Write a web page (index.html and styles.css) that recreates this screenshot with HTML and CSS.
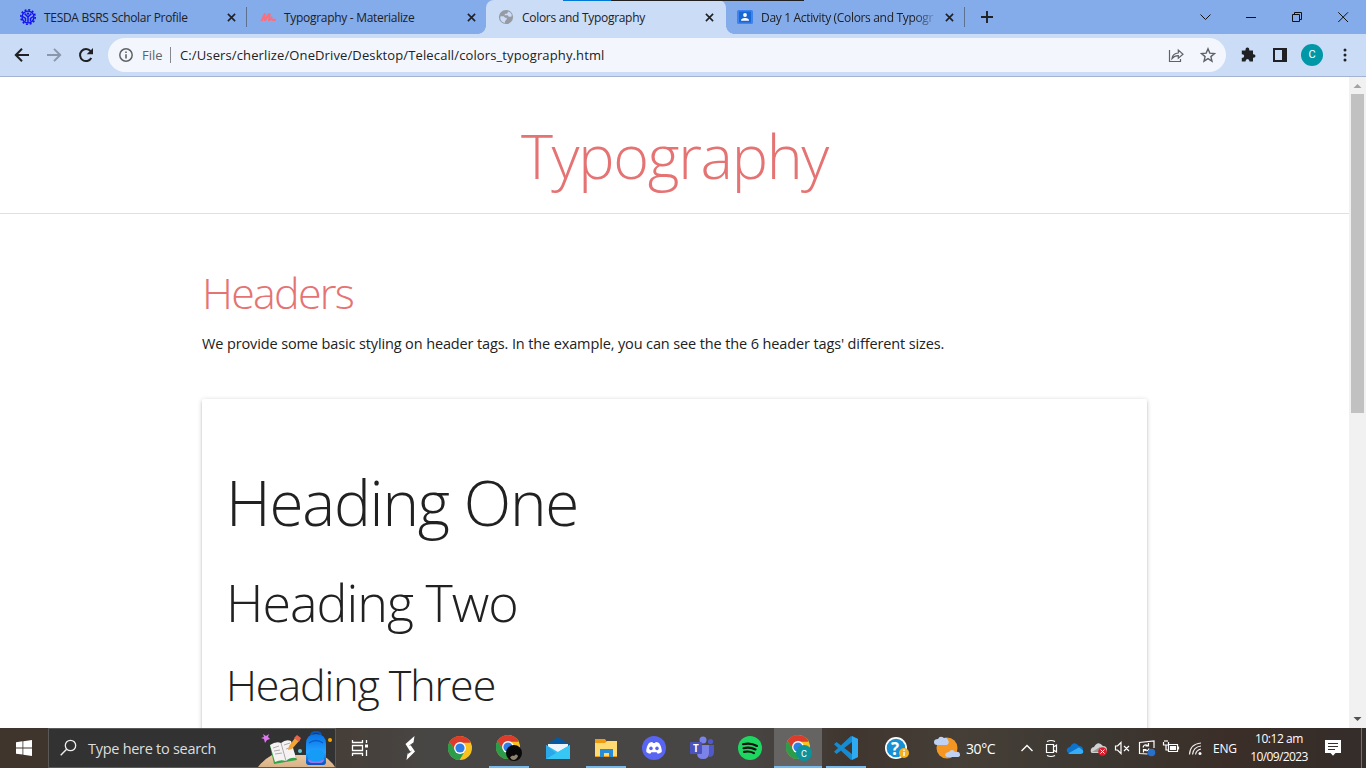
FILE: index.html
```html
<!DOCTYPE html>
<html lang="en">
<head>
<meta charset="utf-8">
<title>Colors and Typography</title>
<link rel="stylesheet" href="styles.css">
</head>
<body>
<svg class="defs" width="0" height="0">
  <defs>
    <symbol id="close" viewBox="0 0 9 9"><path d="M.9.9l7.2 7.2M8.1.9L.9 8.1" stroke="#202124" stroke-width="1.6" fill="none"/></symbol>
    <symbol id="chrome" viewBox="0 0 24 24">
      <circle cx="12" cy="12" r="12" fill="#f9c31f"/>
      <path d="M12 12L1.6 6A12 12 0 0 1 22.4 6.4L12 6.4z" fill="#dd3b2c"/>
      <path d="M1.6 6A12 12 0 0 0 11.4 24L17 14.6L7 14.6z" fill="#2c9c4b"/>
      <path d="M1.6 6A12 12 0 0 1 22.4 6.4H12a5.6 5.6 0 0 0-5 8z" fill="#dd3b2c"/>
      <path d="M1.6 6l5.5 8.7A5.6 5.6 0 0 0 16.9 14.8L11.4 24A12 12 0 0 1 1.6 6z" fill="#2c9c4b"/>
      <circle cx="12" cy="12" r="5.9" fill="#fff"/><circle cx="12" cy="12" r="4.6" fill="#2f7de8"/>
    </symbol>
  </defs>
</svg>

<header class="browser">
  <div class="tabs">
    <div class="tab tab-one">
      <svg class="favicon" viewBox="0 0 16 16"><circle cx="8" cy="8" r="7.2" fill="none" stroke="#1414ee" stroke-width="1.600" stroke-dasharray="2 1.770"/><circle cx="8" cy="8" r="5.900" fill="none" stroke="#1414ee" stroke-width="1.400"/><path d="M8 14V7.500M5.500 12.500V9.500L2.800 7.500M10.500 12.500v-3l2.700-2M4.600 4.600L8 8l3.400-3.400" stroke="#1414ee" stroke-width="1.500" fill="none"/><circle cx="8" cy="4.600" r="1.200" fill="#1414ee"/></svg>
      <span class="tab-title">TESDA BSRS Scholar Profile</span>
      <svg class="close"><use href="#close"/></svg>
    </div>
    <div class="tab tab-two">
      <svg class="favicon" viewBox="0 0 16 16"><path d="M.5 12L4 4.200h2.200L5 8.600 8.400 4.200h2.400l-.6 5 1.800-2.200.8 3.200 1.200-.4h1.500l.5 2.200h-3.600l-.7-1.600L10 12H7.800l.6-4L5.600 12H3.500l.8-3.200L2.600 12z" fill="#fb6f7c"/></svg>
      <span class="tab-title">Typography - Materialize</span>
      <svg class="close"><use href="#close"/></svg>
    </div>
    <div class="tab tab-active">
      <svg class="favicon" viewBox="0 0 16 16"><circle cx="8" cy="8" r="7.1" fill="#969ba3"/><path d="M2.600 7.200l3 .1 1.500 1.500h1.600v1.400L7.100 12l-.3 1.900Q2.600 13 2.200 9z" fill="#cbdcf6"/><path d="M10.300 2.500L9 4.800H7.200L6.400 6.200h3.300l1 1.500h2.600l.5-1.900Q13 3.500 10.300 2.500z" fill="#cbdcf6"/></svg>
      <span class="tab-title">Colors and Typography</span>
      <svg class="close"><use href="#close"/></svg>
    </div>
    <div class="tab tab-last">
      <svg class="favicon" viewBox="0 0 16 16"><rect y="1" width="16" height="14" rx="1.500" fill="#3f83f1"/><rect x="2" y="2.500" width="12" height="11" fill="#1967d2"/><circle cx="8" cy="6" r="1.900" fill="#fff"/><path d="M4 11.700Q4 9 8 9t4 2.700z" fill="#fff"/></svg>
      <span class="tab-title">Day 1 Activity (Colors and Typogr</span>
      <svg class="close"><use href="#close"/></svg>
    </div>
    <svg class="new-tab" viewBox="0 0 12 12"><path d="M6 0v12M0 6h12" stroke="#202124" stroke-width="1.900"/></svg>
    <div class="window-buttons">
      <svg viewBox="0 0 46 28"><path d="M18.500 11.500l5 5 5-5" /></svg>
      <svg viewBox="0 0 46 28"><path d="M18 14.500h10"/></svg>
      <svg viewBox="0 0 46 28"><path d="M18.500 11.500h7v7h-7zM20.500 11v-1.500h7v7H26"/></svg>
      <svg viewBox="0 0 46 28"><path d="M18.300 9.300l9.700 9.700M28 9.300L18.300 19"/></svg>
    </div>
    <div class="peek"></div>
  </div>
  <div class="toolbar">
    <div class="nav">
      <svg viewBox="0 0 16 16"><path d="M15 8H2M8 1.800L1.800 8 8 14.200" stroke="#202124" stroke-width="2" fill="none"/></svg>
      <svg viewBox="0 0 16 16"><path d="M1 8h13M8 1.800L14.200 8 8 14.200" stroke="#8a96a9" stroke-width="1.900" fill="none"/></svg>
      <svg viewBox="0 0 16 16"><path d="M13.300 11A6 6 0 1 1 12.600 4.200" stroke="#202124" stroke-width="2" fill="none"/><path d="M15 1v6.300H8.700z" fill="#202124"/></svg>
    </div>
    <div class="address">
      <svg class="info" viewBox="0 0 14 14"><circle cx="7" cy="7" r="6.200" stroke="#5f6368" stroke-width="1.500" fill="none"/><path d="M7 6.200v4.300M7 3.400V5" stroke="#5f6368" stroke-width="1.600"/></svg>
      <span class="scheme">File</span>
      <span class="url">C:/Users/cherlize/OneDrive/Desktop/Telecall/colors_typography.html</span>
      <svg class="share" viewBox="0 0 16 16"><path d="M1.500 3v11.500h11V12M4 11.500Q4.600 6.500 10.300 6V3L15 7.200 10.300 11.300V8.600Q6.500 8.500 4 11.500z" fill="none" stroke="#5f6368" stroke-width="1.200"/></svg>
      <svg class="star" viewBox="0 0 16 16"><path d="M8 1.800l1.800 4.300 4.700.4-3.600 3.100 1.100 4.600L8 11.700l-4 2.500 1.100-4.600L1.500 6.500l4.700-.4z" fill="none" stroke="#5f6368" stroke-width="1.400"/></svg>
    </div>
    <div class="extensions">
      <svg viewBox="0 0 16 16"><path d="M1.800 3.500h3.700Q5.300.6 7.400.6t1.900 2.900H13v3.700q2.500-.2 2.500 1.800T13 10.800v3.700H9.500Q9.500 12 7.500 12t-2 2.500H1.800V11Q4.200 11 4.200 9T1.800 7.200z" fill="#202124"/></svg>
      <svg viewBox="0 0 16 16"><path d="M2 2h12v12H2z" fill="none" stroke="#202124" stroke-width="2"/><path d="M10 2h4v12h-4z" fill="#202124"/></svg>
      <span class="avatar">C</span>
      <svg class="kebab" viewBox="0 0 16 16"><circle cx="8" cy="3" r="1.500"/><circle cx="8" cy="8" r="1.500"/><circle cx="8" cy="13" r="1.500"/></svg>
    </div>
  </div>
</header>

<div class="viewport">
  <main class="page">
    <div class="masthead"><h1 class="page-title">Typography</h1></div>
    <section class="container">
      <h3 class="section-title">Headers</h3>
      <p class="intro">We provide some basic styling on header tags. In the example, you can see the the 6 header tags' different sizes.</p>
      <div class="card">
        <h1 class="heading one">Heading One</h1>
        <h2 class="heading two">Heading Two</h2>
        <h3 class="heading three">Heading Three</h3>
      </div>
    </section>
  </main>
  <div class="scrollbar">
    <svg viewBox="0 0 17 17"><path d="M4.500 11L8.500 7l4 4z" fill="#a3a3a3"/></svg>
    <div class="thumb"></div>
    <svg viewBox="0 0 17 17"><path d="M4.500 6l4 4 4-4z" fill="#505050"/></svg>
  </div>
</div>

<footer class="taskbar">
  <div class="start"><svg width="16" height="16" viewBox="0 0 16 16"><path d="M0 2.200l6.500-.9v6.200H0zM7.300 1.200L16 0v7.500H7.300zM0 8.400h6.500v6.200L0 13.700zM7.300 8.400H16V16l-8.700-1.200z" fill="#fff"/></svg></div>
  <div class="search">
    <svg width="18" height="18" viewBox="0 0 18 18"><circle cx="10.500" cy="6.500" r="5.200" fill="none" stroke="#eee" stroke-width="1.300"/><path d="M6.600 10.300L.7 16.200" stroke="#eee" stroke-width="1.400"/></svg>
    <span>Type here to search</span>
    <svg class="school" width="80" height="38" viewBox="0 0 80 38">
      <defs><linearGradient id="desk" x2="0" y2="1"><stop stop-color="#e9c8a0"/><stop offset="1" stop-color="#d9b287"/></linearGradient><linearGradient id="bag" x2="0" y2="1"><stop stop-color="#0872e6"/><stop offset=".6" stop-color="#24a2ff"/><stop offset="1" stop-color="#0750bd"/></linearGradient></defs>
      <path d="M1 38q5-7 14-12h50q9 5 13 12z" fill="url(#desk)"/>
      <path d="M6 5l3 2 3-2-1 3 2 2-3 1-2 3-1-4-3-1 3-1z" fill="#df79ef"/>
      <path d="M13 17l4 18 23-4-3-8z" fill="#34a447"/><path d="M13 16q6-4 11-2 5-4 10-2l5 17q-6-1-10 3-5-2-11 1z" fill="#f6f2f3"/><path d="M24 14l5 18" stroke="#aaa" fill="none"/><path d="M16 19l6-2m-5 5l6-1m-5 4l7-1m2-8l6-2m-4 6l6-2" stroke="#999" stroke-width=".8"/>
      <path d="M31 21l1-4L38 9l4 3-7 8z" fill="#f3a536"/><path d="M37 9l3-3 4 3-2 4z" fill="#e8634e"/>
      <circle cx="43" cy="22" r="2" fill="#63cbd7"/><circle cx="73" cy="11" r="2" fill="#f8a900"/>
      <path d="M54 7q0-4 5-4t5 4" fill="none" stroke="#0756b8" stroke-width="2"/><path d="M49 33V15q0-10 10-10t10 10v18q0 3-3 3H52q-3 0-3-3z" fill="url(#bag)"/><rect x="51" y="21" width="16" height="12" rx="5" fill="#159cf6"/><path d="M51 30q0 4 4 4h8q4 0 4-4-8 5-16 0z" fill="#9476ed"/>
      <path d="M52 14q7-5 14 0" stroke="#0a5ccb" stroke-width="1.500" fill="none"/>
    </svg>
  </div>
  <div class="app view"><svg viewBox="0 0 24 24"><path d="M4.500 4v2.500h10V4M4.500 20v-2.500h10V20M4.500 9.500h10v5h-10zM18.500 4v3M18.500 14v6" fill="none" stroke="#fff" stroke-width="1.300"/><rect x="17" y="8.500" width="3" height="3" fill="#fff"/></svg></div>
  <div class="app slash"><svg viewBox="0 0 24 24"><path d="M16.500 0l-1 6.500-3 2.500 4.500 6.500L8.500 24l1-6.500 3-1.500-5-8z" fill="#fff"/><path d="M11.500 9.500l4-2.500M9.500 18l4-3" stroke="#555" stroke-width=".8"/></svg></div>
  <div class="app chrome-one"><svg viewBox="0 0 24 24"><use href="#chrome"/></svg></div>
  <div class="app chrome-two open"><svg viewBox="0 0 26 26"><use href="#chrome" width="24" height="24"/><circle cx="18" cy="18" r="8" fill="#090909"/><path d="M14 22.500q2.500-3 4-1.500 3-3 4 .5-2 3.500-4 3.500-2.500 0-4-2.500z" fill="#8f846f"/></svg></div>
  <div class="app"><svg viewBox="0 0 24 24"><path d="M0 9L12 1l12 8v2H0z" fill="#0758a3"/><path d="M2 8h20v10H2z" fill="#eef5fa"/><path d="M0 9l12 7 12-7v14H0z" fill="#35bff1"/><path d="M0 9l17 14H0z" fill="#2ba8ea"/><path d="M0 23l24-14v14z" fill="#36c7f5"/></svg></div>
  <div class="app open"><svg viewBox="0 0 24 24"><path d="M1 3h10l2 3h10v15H1z" fill="#ed9b13"/><path d="M1 7h10l2-2h10v15H1z" fill="#ffda70"/><path d="M6 13h13v8h-4v-4h-5v4H6z" fill="#278cd7"/></svg></div>
  <div class="app"><svg viewBox="0 0 24 24"><circle cx="12" cy="12" r="12" fill="#5865f2"/><path d="M7 7q2-1 3.300-1l.7 1h2l.7-1Q15 6 17 7q3 4 2.700 9-2 1.500-4 1.800l-1-1.500h-5.400l-1 1.500q-2-.3-4-1.800Q4 11 7 7z" fill="#fff"/><ellipse cx="9" cy="12.300" rx="1.700" ry="1.900" fill="#5865f2"/><ellipse cx="15" cy="12.300" rx="1.700" ry="1.900" fill="#5865f2"/></svg></div>
  <div class="app"><svg viewBox="0 0 24 24"><circle cx="20.500" cy="5.500" r="2.600" fill="#5059c9"/><circle cx="13" cy="4" r="3.500" fill="#7b83eb"/><path d="M17 9h7v7q0 5-5 5z" fill="#5059c9"/><path d="M8 9h11v8q0 6-6 6t-6-6z" fill="#7b83eb"/><rect y="6" width="12" height="12" rx="1" fill="#4b53bc"/><text x="3" y="15.700" class="teams-t">T</text></svg></div>
  <div class="app"><svg viewBox="0 0 24 24"><circle cx="12" cy="12" r="12" fill="#1ed760"/><path d="M5 8.300q7.500-2 14 1.700M5.500 12.200q6.500-1.700 12 1.300M6 15.900q5.500-1.200 10 1.200" stroke="#111" stroke-width="2.100" fill="none" stroke-linecap="round"/></svg></div>
  <div class="app open active"><svg viewBox="0 0 26 26"><use href="#chrome" width="24" height="24"/><circle cx="18" cy="18" r="8" fill="#0b929b"/><text x="15" y="21.500" class="badge-c">C</text></svg></div>
  <div class="app open"><svg viewBox="0 0 24 24"><path d="M17 0l7 3v18l-7 3L0 8.300 2.500 6 18 18V6L2.500 18 0 15.700z" fill="#168bd2"/><path d="M18 0l6 3v18l-6 3z" fill="#2daaf2"/></svg></div>
  <div class="app help"><svg viewBox="0 0 24 24"><circle cx="11" cy="12" r="11" fill="#fff"/><circle cx="11" cy="12" r="9.300" fill="#1691d5"/><text x="6" y="18.500" class="question">?</text><circle cx="19" cy="17" r="5" fill="#f4af22"/><path d="M19 16v4M19 13.500V15" stroke="#fff" stroke-width="1.500"/></svg></div>
  <div class="weather">
    <svg width="26" height="24" viewBox="0 0 26 24"><circle cx="13" cy="12" r="10.500" fill="#f59622"/><path d="M3 9q-3 0-3-3t4-3q2-4 6-1 3-1 4 2 2 3-1 5zM13 21q-3-1-1-4 2-1 3-1 3-4 6 0 5-1 5 3 0 2-3 2z" fill="#bfd2f4"/></svg>
    <span>30°C</span>
  </div>
  <div class="tray">
    <svg viewBox="0 0 24 24"><path d="M6.500 15l5.500-5.500 5.500 5.500" fill="none" stroke="#fff" stroke-width="1.400"/></svg>
    <svg viewBox="0 0 24 24"><path d="M7.500 8.500h7v8h-7zM14.500 11l3-2v7l-3-2M8 5.500q4-2 8 0M8 19.500q4 2 8 0" fill="none" stroke="#fff" stroke-width="1.200"/></svg>
    <svg viewBox="0 0 24 24"><path d="M6 17q-3-1-2-4 1-2 3-2 4-7 9-1 4 0 4 4 0 3-3 3z" fill="#0c72cb"/><path d="M5 17.500l9-5q2-2 4 .500 3 1 2 4l-2 1H7z" fill="#36aef4"/></svg>
    <svg viewBox="0 0 24 24"><path d="M5 17q-2-1-1-4 1-2 3-2 4-7 9-1 4 0 4 4 0 3-3 3z" fill="#d0d0d0"/><path d="M5 16l8-5 3 5z" fill="#999"/><circle cx="15.500" cy="15.500" r="4.300" fill="#d91f2b"/><path d="M13.500 13.500l4 4m0-4l-4 4" stroke="#fff"/></svg>
    <svg viewBox="0 0 24 24"><path d="M4.500 10h2L10 6.500v11L6.500 14h-2zM13 10l5 5m0-5l-5 5" fill="none" stroke="#fff" stroke-width="1.200"/></svg>
    <svg viewBox="0 0 24 24"><path d="M19 12V5L4.500 6.500v11l8 .5M8 11.500q1-4 5-2M13.500 7v3h-3M14 12.500q-1 3.500-5 1.500M8.500 16.500v-3h3" fill="none" stroke="#fff" stroke-width="1.200"/><circle cx="16.500" cy="16.500" r="3.800" fill="#2870c9"/></svg>
    <svg viewBox="0 0 24 24"><path d="M9.500 8.500h9v7h-9zM19.500 10.500v3M4.500 6v3h5V6M6 4v2m2-2v2M7 9v5h2" fill="none" stroke="#fff" stroke-width="1.200"/><path d="M11 10h6v4h-6z" fill="#fff"/></svg>
    <svg viewBox="0 0 24 24"><path d="M6.500 18.500Q7 8 18 7M9.500 18.500q.8-7.500 8.500-8.500M12.500 18.500q.8-4.500 5.500-5.500" fill="none" stroke="#eee" stroke-width="1.200"/><circle cx="17" cy="17.500" r="1.500" fill="#fff"/></svg>
  </div>
  <span class="language">ENG</span>
  <div class="clock"><span class="time">10:12 am</span><span class="date">10/09/2023</span></div>
  <svg class="notice" width="16" height="16" viewBox="0 0 16 16"><path d="M0 0h16v13h-5.500L8 15.700 5.500 13H0z" fill="#fff"/><path d="M3 3.500h10M3 6.500h10M3 9.500h7" stroke="#37302c"/></svg>
  <div class="show-desktop"></div>
</footer>
</body>
</html>
```
FILE: styles.css
```css
* { box-sizing: border-box; }
body { margin: 0; width: 1366px; height: 768px; overflow: hidden; display: flex; flex-direction: column; background: #fff; font-family: "Open Sans", "Noto Sans", sans-serif; }
svg { display: block; flex: none; }
.defs { position: absolute; }

.browser { height: 77px; flex: none; background: #cbdcf6; border-bottom: 1px solid #a3b3d1; }
.tabs { position: relative; height: 34px; display: flex; align-items: center; background: #84abea; }
.tab { height: 34px; display: flex; align-items: center; flex: none; }
.favicon { width: 16px; height: 16px; }
.tab-title { margin-left: 8px; flex: 1; white-space: nowrap; font-size: 12px; line-height: 20px; letter-spacing: -.3px; color: #202124; padding-top: 1px; }
.close { width: 9px; height: 9px; margin-left: 6px; }
.tab-one { width: 247px; padding: 0 11px 0 20px; }
.tab-one::after, .tab-last::after { content: ""; width: 1px; height: 20px; background: #5d7291; margin-left: 10px; margin-right: -11px; }
.tab-two { width: 239px; padding: 0 10px 0 13px; }
.tab-active { width: 240px; padding: 0 16px 0 12px; position: relative; background: #cbdcf6; border-radius: 8px 8px 0 0; }
.tab-active .close { margin-right: -4px; }
.tab-active::before, .tab-active::after { content: ""; position: absolute; bottom: 0; width: 8px; height: 8px; }
.tab-active::before { left: -8px; background: radial-gradient(circle at 0 0, transparent 7.500px, #cbdcf6 8px); }
.tab-active::after { right: -8px; background: radial-gradient(circle at 100% 0, transparent 7.500px, #cbdcf6 8px); }
.tab-last { width: 238px; padding: 0 10px 0 11px; }
.tab-last .tab-title { width: 175px; letter-spacing: -.33px; -webkit-mask-image: linear-gradient(90deg, #000 86%, transparent); mask-image: linear-gradient(90deg, #000 86%, transparent); }
.new-tab { width: 12px; height: 12px; margin-left: 17px; }
.window-buttons { display: flex; margin-left: auto; }
.window-buttons svg { width: 46px; height: 28px; fill: none; stroke: #111; stroke-width: 1; }
.peek { position: absolute; top: 0; left: 563px; width: 241px; height: 1px; background: linear-gradient(90deg, #0078d7 48px, #202020 48px); }
.toolbar { height: 42px; display: flex; align-items: center; }
.nav { display: flex; gap: 16px; width: 108px; padding-left: 14px; }
.nav svg { width: 16px; height: 16px; }
.address { width: 1118px; height: 34px; border-radius: 17px; background: #f3f7fd; display: flex; align-items: center; padding-left: 11px; font-size: 13px; white-space: nowrap; }
.info { width: 14px; height: 14px; }
.scheme { color: #5f6368; margin-left: 9px; width: 29px; height: 16px; line-height: 16px; border-right: 1px solid #85898e; }
.url { color: #202124; margin-left: 9px; letter-spacing: .12px; }
.share { width: 16px; height: 16px; margin-left: auto; }
.star { width: 16px; height: 16px; margin: 0 10px 0 16px; }
.extensions { display: flex; align-items: center; padding-left: 14px; }
.extensions svg { width: 16px; height: 16px; margin-right: 16px; }
.extensions .avatar { width: 22px; height: 22px; border-radius: 50%; background: #0097a7; color: #fff; font: 11px/22px Roboto, sans-serif; text-align: center; margin: 0 14px 0 -3px; }
.extensions .kebab { margin: 0; fill: #202124; }

.viewport { height: 651px; display: flex; overflow: hidden; }
.page { width: 1349px; }
.masthead { height: 137px; border-bottom: 1px solid #e0e0e0; padding-top: 44px; }
h1, h2, h3, p { margin: 0; }
.page-title, .section-title, .heading { font-weight: 300; white-space: nowrap; color: #212121; }
.page-title { font-size: 61px; line-height: 70px; letter-spacing: -1.300px; text-align: center; color: #e57373; }
.container { width: 945px; margin-left: 202px; padding-top: 54px; }
.section-title { font-size: 43px; line-height: 50px; letter-spacing: -1.750px; color: #e57373; }
.intro { font-size: 14.500px; line-height: 22px; letter-spacing: -.125px; margin-top: 15px; color: #212121; white-space: nowrap; }
.card { height: 400px; margin-top: 44px; padding: 68px 24px 0; border-radius: 2px; background: #fff; box-shadow: 0 2px 2px 0 rgba(0,0,0,.14), 0 3px 1px -2px rgba(0,0,0,.12), 0 1px 5px 0 rgba(0,0,0,.2); }
.one { font-size: 62px; line-height: 70px; letter-spacing: -1.200px; }
.two { font-size: 52px; line-height: 60px; letter-spacing: -1px; margin-top: 35px; }
.three { font-size: 43px; line-height: 50px; letter-spacing: -1.100px; margin-top: 28px; }
.scrollbar { width: 17px; display: flex; flex-direction: column; background: #f1f1f1; }
.scrollbar svg { width: 17px; height: 17px; }
.thumb { width: 13px; height: 319px; margin: 0 2px auto; background: #c1c1c1; }

.taskbar { height: 40px; display: flex; align-items: center; background: linear-gradient(90deg, #40352d 0, #40352d 48px, #463e38 340px, #484644 430px, #484644 740px, #40362f 850px, #453f37 960px, #3d3832 1090px, #3b2e28 1230px, #342d2a 1366px); color: #fff; }
.start { width: 48px; display: flex; justify-content: center; }
.search { width: 288px; height: 40px; border: 1px solid #5b5957; background: #323232; display: flex; align-items: center; padding-left: 11px; }
.search span { margin-left: 10px; color: #dedede; font-size: 14.500px; letter-spacing: -.280px; white-space: nowrap; }
.search .school { margin-left: auto; margin-right: -2px; }
.app { width: 48px; height: 40px; flex: none; display: flex; align-items: center; justify-content: center; border-bottom: 2px solid transparent; padding-top: 2px; }
.app svg { width: 24px; height: 24px; overflow: visible; }
.view { width: 48px; }
.slash { width: 51px; }
.chrome-one { width: 49px; }
.chrome-two { width: 50px; }
.help { width: 51px; padding-left: 2px; }
.open { border: 0; background: linear-gradient(#76b9ed, #76b9ed) 50% 100% / 40px 2px no-repeat; padding-top: 0; }
.chrome-two svg, .active svg { width: 26px; height: 26px; }
.active svg { margin-left: 2px; }
.active { background: linear-gradient(#76b9ed, #76b9ed) 0 100% / 48px 2px no-repeat, #666462; }
.teams-t { font: bold 10px "Open Sans", sans-serif; fill: #fff; }
.badge-c { font: 9px Roboto, sans-serif; fill: #fff; }
.question { font: bold 17px "Open Sans", sans-serif; fill: #fff; }
.weather { display: flex; align-items: center; margin-left: 13px; width: 81px; }
.weather span { font-size: 14px; letter-spacing: -.4px; margin-left: 6px; }
.tray { display: flex; width: 198px; }
.tray svg { width: 24px; height: 24px; }
.language { width: 24px; font-size: 12px; letter-spacing: -.2px; }
.clock { width: 84px; display: flex; flex-direction: column; align-items: center; font-size: 12px; line-height: 18px; letter-spacing: -.450px; white-space: nowrap; }
.date { letter-spacing: -.600px; }
.notice { margin-left: 4px; }
.show-desktop { width: 1px; height: 40px; background: #75706c; margin-left: 20px; }
```
